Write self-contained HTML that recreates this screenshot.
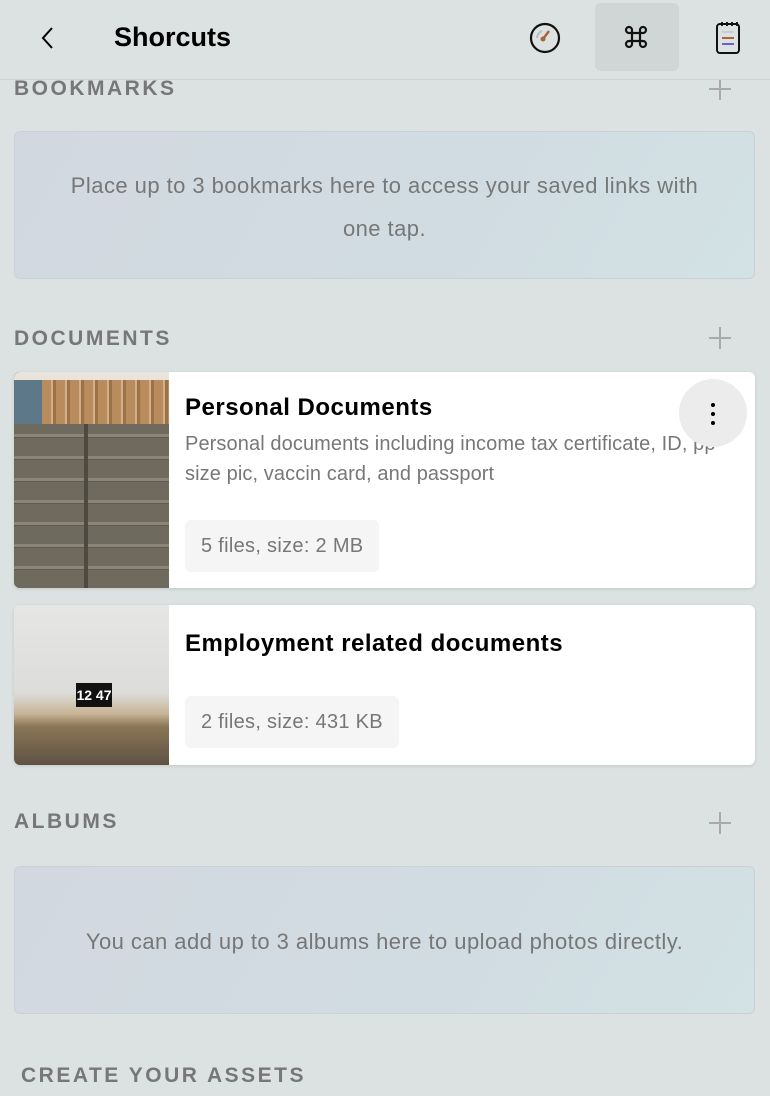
<!DOCTYPE html>
<html><head><meta charset="utf-8"><style>
*{margin:0;padding:0;box-sizing:border-box}
body{width:770px;height:1096px;overflow:hidden;background:#dce2e1;font-family:"Liberation Sans",sans-serif;position:relative}
.hdr{position:absolute;left:0;top:0;width:770px;height:80px;border-bottom:1px solid #cdd3d2;background:#dce2e1;z-index:2}
.title{position:absolute;left:114px;top:22px;font-size:27px;font-weight:bold;color:#000}
.sec{position:absolute;left:14px;font-size:21px;font-weight:bold;color:#777;letter-spacing:2.5px}
.plus{position:absolute;left:709px;width:22px;height:22px}
.plus:before{content:"";position:absolute;left:10px;top:0;width:2px;height:22px;background:#aaa}
.plus:after{content:"";position:absolute;left:0;top:10px;width:22px;height:2px;background:#aaa}
.ph{position:absolute;left:14px;width:741px;height:148px;border:1px solid #c9d0d6;border-radius:6px;background:linear-gradient(120deg,#d2d8e0,#d1dde2 70%,#d2e2e5);color:#777;font-size:22px;letter-spacing:0.45px;text-align:center;line-height:43px}
.card{position:absolute;left:14px;width:741px;background:#fff;border-radius:6px;overflow:hidden;box-shadow:0 1px 3px rgba(0,0,0,.12)}
.img{position:absolute;left:0;top:0;width:155px;height:100%;overflow:hidden}
.ct{position:absolute;left:171px;font-size:24px;letter-spacing:0.5px;font-weight:bold;color:#000;white-space:nowrap}
.cd{position:absolute;left:171px;top:57px;font-size:20px;letter-spacing:0.1px;color:#777;line-height:30px;white-space:nowrap}
.tag{position:absolute;left:171px;height:52px;background:#f5f5f5;border-radius:6px;font-size:20px;letter-spacing:0.3px;color:#777;line-height:52px;padding:0 16px;white-space:nowrap}
</style></head><body>
<div class="hdr">
<svg style="position:absolute;left:38px;top:26px" width="20" height="24" viewBox="0 0 20 24"><path d="M14 2 L5 12 L14 22" fill="none" stroke="#000" stroke-width="2"/></svg>
<div class="title">Shorcuts</div>
<svg style="position:absolute;left:528px;top:21px" width="34" height="34" viewBox="0 0 34 34"><circle cx="17" cy="17" r="14" fill="none" stroke="#111" stroke-width="2.2"/><path d="M9 17 A8 8 0 0 1 14 10" fill="none" stroke="#bbb" stroke-width="2"/><path d="M15 18 L21 10" stroke="#a5663a" stroke-width="2.5"/><circle cx="15" cy="18" r="2.5" fill="#a5663a"/></svg>
<div style="position:absolute;left:595px;top:3px;width:84px;height:68px;background:#d0d6d5;border-radius:6px"></div>
<svg style="position:absolute;left:623px;top:24px" width="26" height="26" viewBox="0 0 26 26" fill="none" stroke="#111" stroke-width="2.2"><path d="M9 9H17V17H9Z"/><path d="M9 9V6A3 3 0 1 0 6 9H9"/><path d="M17 9V6A3 3 0 1 1 20 9H17"/><path d="M9 17V20A3 3 0 1 1 6 17H9"/><path d="M17 17V20A3 3 0 1 0 20 17H17"/></svg>
<svg style="position:absolute;left:715px;top:20px" width="28" height="36" viewBox="0 0 28 36"><rect x="2" y="4" width="22" height="29" rx="3" fill="none" stroke="#111" stroke-width="2"/><path d="M7 2v4M12 2v4M17 2v4M22 2v4" stroke="#111" stroke-width="1.8"/><path d="M7 12h12" stroke="#c8ccd4" stroke-width="2"/><path d="M7 18h12" stroke="#a5663a" stroke-width="2"/><path d="M7 24h12" stroke="#6a60c8" stroke-width="2"/></svg>
</div>
<div class="sec" style="top:77px">BOOKMARKS</div><div class="plus" style="top:78px"></div>
<div class="ph" style="top:131px;padding-top:32px">Place up to 3 bookmarks here to access your saved links with<br>one tap.</div>
<div class="sec" style="top:327px">DOCUMENTS</div><div class="plus" style="top:327px"></div>
<div class="card" style="top:372px;height:216px">
<div class="img" style="background:repeating-linear-gradient(180deg,#6e6a5e 0 18px,#8a8576 18px 21px,#5e5a50 21px 22px),#6e6a5e">
<div style="position:absolute;left:0;top:0;width:155px;height:52px;background:repeating-linear-gradient(90deg,#b88c5c 0 9px,#d4b08a 9px 11px,#9c7248 11px 14px);"></div>
<div style="position:absolute;left:0;top:0;width:28px;height:52px;background:#5d7888"></div>
<div style="position:absolute;left:0;top:0;width:155px;height:8px;background:#e8e4dc"></div>
<div style="position:absolute;left:70px;top:52px;width:4px;height:164px;background:#4e4a42"></div>
</div>
<div class="ct" style="top:22px">Personal Documents</div>
<div class="cd">Personal documents including income tax certificate, ID, pp<br>size pic, vaccin card, and passport</div>
<div class="tag" style="top:148px">5 files, size: 2 MB</div>
<div style="position:absolute;left:665px;top:7px;width:68px;height:68px;border-radius:50%;background:#ececec"></div>
<div style="position:absolute;left:697px;top:31px;width:4px;height:4px;border-radius:50%;background:#000;box-shadow:0 9px 0 #000,0 18px 0 #000"></div>
</div>
<div class="card" style="top:605px;height:160px">
<div class="img" style="background:linear-gradient(180deg,#e6e6e4 0,#dcdcda 55%,#c8b496 68%,#8a7656 76%,#5e5244 100%)"><div style="position:absolute;left:62px;top:78px;width:36px;height:24px;background:#111;color:#fff;font-size:14px;font-weight:bold;text-align:center;line-height:24px">12 47</div></div>
<div class="ct" style="top:25px">Employment related documents</div>
<div class="tag" style="top:91px">2 files, size: 431 KB</div>
</div>
<div class="sec" style="top:810px">ALBUMS</div><div class="plus" style="top:812px"></div>
<div class="ph" style="top:866px;padding-top:53px">You can add up to 3 albums here to upload photos directly.</div>
<div class="sec" style="top:1064px;left:21px">CREATE YOUR ASSETS</div>
</body></html>
